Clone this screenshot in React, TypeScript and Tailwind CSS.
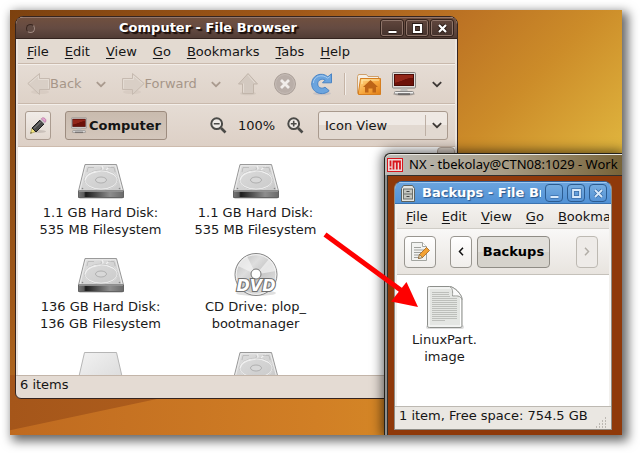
import React from "react";

function MenuBar({ items, className }: { items: string[]; className: string }) {
  return (
    <nav className={`flex items-center overflow-hidden whitespace-nowrap ${className}`}>
      {items.map((item) => (
        <button key={item} type="button" className="shrink-0 leading-[17px]">
          <span className="underline underline-offset-2">{item[0]}</span>
          {item.slice(1)}
        </button>
      ))}
    </nav>
  );
}

function Chevron({ color }: { color: string }) {
  return (
    <svg width="10" height="7" viewBox="0 0 10 7" fill="none" aria-hidden="true">
      <path d="M0.8 1.2 5 5.2 9.2 1.2" stroke={color} strokeWidth="1.8" />
    </svg>
  );
}

function ArrowIcon({ direction }: { direction: "left" | "right" }) {
  return (
    <svg width="23" height="24" viewBox="0 0 23 24" aria-hidden="true" className="shrink-0">
      <g transform={direction === "right" ? "matrix(-1 0 0 1 23 0)" : undefined}>
        <ellipse cx="13" cy="20" rx="9" ry="2" fill="#cfc3b9" opacity="0.5" />
        <path d="M0.8 11.5 12.5 1.5V6.5H22.5V17.5H12.5V22.5Z" fill="#d9cfc6" stroke="#c6bab0" />
        <path d="M2.5 11.5 11.5 3.8V7.5H21.5V16.5" fill="none" stroke="#e4dcd4" />
      </g>
    </svg>
  );
}

function UpIcon() {
  return (
    <svg width="22" height="24" viewBox="0 0 22 24" aria-hidden="true">
      <ellipse cx="11" cy="21.5" rx="8" ry="1.8" fill="#d3c8be" />
      <path d="M11 1.5 20.5 12H16.5V21.5H5.5V12H1.5Z" fill="#d3c9c0" stroke="#c1b5aa" />
      <path d="M11 3.2 17.8 11M6.5 11.5V20.5" fill="none" stroke="#e4dbd3" />
    </svg>
  );
}

function StopIcon() {
  return (
    <svg width="24" height="24" viewBox="0 0 24 24" aria-hidden="true">
      <circle cx="12" cy="12" r="10.5" fill="#b9aea8" stroke="#aa9f98" />
      <circle cx="12" cy="12" r="9.4" fill="none" stroke="#c5bbb5" />
      <path d="M8 8l8 8M16 8l-8 8" stroke="#f1edea" strokeWidth="2.8" />
    </svg>
  );
}

function ReloadIcon() {
  return (
    <svg width="24" height="24" viewBox="0 0 24 24" aria-hidden="true">
      <ellipse cx="12" cy="21.5" rx="9" ry="1.8" fill="#c9c3c3" />
      <path
        d="M17.8 4.8 21.5 1.8V10.8H12.5L15.2 8.1C11.6 6 7.6 8.2 7.7 12c.2 3.900 4.200 5.200 7.300 3.200l4.200 3.500C13 24.500 1.800 21.200 1.700 12 1.800 3 11.600-.6 17.800 4.800Z"
        fill="#6ba4de"
        stroke="#4a84c4"
      />
      <path d="M3.3 11C4 4 12 1.5 17.800 6.200l2.200-1.800" fill="none" stroke="#a5cbf0" />
    </svg>
  );
}

function HomeIcon() {
  return (
    <svg width="26" height="24" viewBox="0 0 26 24" aria-hidden="true">
      <defs>
        <linearGradient id="home" x1="0" y1="0" x2="1" y2="1">
          <stop offset="0" stopColor="#ffdc8c" />
          <stop offset="0.55" stopColor="#f6a53b" />
          <stop offset="1" stopColor="#df7c14" />
        </linearGradient>
      </defs>
      <path d="M1.500 21.500V4.500l1-2h8l1.500 2H22.500V21Z" fill="#f4efe6" stroke="#d0a06a" />
      <path d="M4 6.500h17" stroke="#cabfae" />
      <path d="M2.500 22.500V20L4.500 6.500h20v16Z" fill="url(#home)" stroke="#d67e20" />
      <path d="M6 12V8H23" fill="none" stroke="#ffe7a5" />
      <path d="M14.500 8 22 15H20v5.500h-3.500v-4h-4v4H9V15H7Z" fill="#bd6517" />
    </svg>
  );
}

function ComputerIcon({ width, height }: { width: number; height: number }) {
  return (
    <svg width={width} height={height} viewBox="0 0 24 24" aria-hidden="true" className="shrink-0">
      <ellipse cx="12" cy="22" rx="11" ry="1.800" fill="#b3a9a2" />
      <rect x="0.500" y="0.500" width="23" height="15.500" rx="1" fill="#dddddb" stroke="#85817e" />
      <rect x="2" y="2" width="20" height="12" fill="#4c0b06" />
      <path d="M3 3h18v3C13 6 10 10 3 11Z" fill="#932619" />
      <path d="M21 6v7H3v-2C10 10 13 6 21 6Z" fill="#6c1109" />
      <path d="M9 16.500h6l1 3H8Z" fill="#bcbcba" />
      <rect x="2.500" y="19.500" width="19" height="2.500" rx="1" fill="#f0f0ef" stroke="#8a8886" />
      <path d="M6 22h12" stroke="#3f3d3c" />
    </svg>
  );
}

function PencilIcon() {
  return (
    <svg width="18" height="18" viewBox="0 0 18 18" aria-hidden="true">
      <ellipse cx="10" cy="14.500" rx="7" ry="1.500" fill="#c9c0b9" />
      <path d="M1.500 16.500 3 11 6.500 14.500Z" fill="#f2e37c" stroke="#a39a4f" strokeWidth="0.700" />
      <path d="M3 11 11 3l4 4-8 8Z" fill="#4a4a4a" stroke="#1c1c1c" />
      <path d="M5 11.500 11.500 5" stroke="#8b8b8b" />
      <path d="M11 3l1.300-1.300 4 4L15 7Z" fill="#cacaca" />
      <path d="m12.300 1.700 1-.8c2-.8 4.200 1.600 3.600 3.300l-.9 1.200Z" fill="#e6a3d1" stroke="#b575a0" strokeWidth="0.700" />
      <path d="m1.500 16.500.4-1.400 1 1Z" fill="#222" />
    </svg>
  );
}

function Magnifier({ plus }: { plus?: boolean }) {
  return (
    <svg width="17" height="17" viewBox="0 0 17 17" fill="none" aria-hidden="true">
      <circle cx="6.700" cy="6.700" r="5.400" fill="#efebe7" stroke="#4b4b48" strokeWidth="2" />
      <path d="m11 11 4.500 4.500" stroke="#4b4b48" strokeWidth="2.600" />
      <path d={plus ? "M3.800 6.700h5.800M6.700 3.800v5.800" : "M3.800 6.700h5.800"} stroke="#4b4b48" strokeWidth="1.600" />
    </svg>
  );
}

function DiskIcon({ plain }: { plain?: boolean }) {
  return (
    <svg width="48" height="48" viewBox="0 0 48 48" aria-hidden="true" className="mx-auto block">
      <defs>
        <linearGradient id="diskTop" x1="0" y1="0" x2="1" y2="1">
          <stop offset="0" stopColor="#dedede" />
          <stop offset="1" stopColor="#c9c9c9" />
        </linearGradient>
        <linearGradient id="diskPlain" x1="0" y1="0" x2="1" y2="1">
          <stop offset="0" stopColor="#f2f2f2" />
          <stop offset="1" stopColor="#d9d9d9" />
        </linearGradient>
        <linearGradient id="diskFront" x1="0" y1="0" x2="1" y2="0">
          <stop offset="0" stopColor="#777" />
          <stop offset="0.120" stopColor="#5a5a5a" />
          <stop offset="0.160" stopColor="#1c1c1c" />
          <stop offset="0.700" stopColor="#8e8e8e" />
          <stop offset="1" stopColor="#6a6a6a" />
        </linearGradient>
      </defs>
      {plain ? (
        <path d="M7.500 8.500h32l6 26v7h-44v-7Z" fill="url(#diskPlain)" stroke="#b5b5b5" />
      ) : (
        <>
          <rect x="2" y="40" width="44" height="3" rx="1.500" fill="#d5d5d5" />
          <path d="M8 8.500h31.500L46.500 35H1.500Z" fill="url(#diskTop)" stroke="#9a9a9a" />
          <path d="M3 34 9 9.800h29.500L45 34" fill="none" stroke="#ececec" />
          <path
            d="M25 10c3 4-1 5-6 6-6 1-10 4-11 8M40 21c-3-4-7-4-9-5-3-2-1-4 3-5"
            fill="none"
            stroke="#f2f2f2"
            strokeWidth="1.200"
          />
          <path
            d="M10 16l1-4.500h6M24 11.500c1.500 2.500-1 3-5 4M31 11.500h6l1.200 4.500"
            fill="none"
            stroke="#b2b2b2"
            strokeWidth="0.700"
          />
          <ellipse cx="24" cy="24" rx="16.500" ry="9.500" fill="none" stroke="#f0f0f0" strokeWidth="1.600" />
          <ellipse cx="24" cy="24" rx="17" ry="10" fill="none" stroke="#b0b0b0" strokeWidth="0.600" />
          <ellipse cx="24" cy="24" rx="5.500" ry="3" fill="#d8d8d8" stroke="#a6a6a6" strokeWidth="0.800" />
          <path d="M1.500 35h45v6.500h-45Z" fill="url(#diskFront)" stroke="#636363" />
          <path d="M2 35.300h44" stroke="#9c9c9c" />
          <circle cx="5.500" cy="32.500" r="0.800" fill="#888" />
          <circle cx="42.500" cy="32.500" r="0.800" fill="#888" />
        </>
      )}
    </svg>
  );
}

function DvdIcon() {
  return (
    <svg width="48" height="48" viewBox="0 0 48 48" aria-hidden="true" className="mx-auto block">
      <defs>
        <linearGradient id="disc" x1="0" y1="0" x2="1" y2="1">
          <stop offset="0" stopColor="#b4b4b4" />
          <stop offset="0.350" stopColor="#dedede" />
          <stop offset="0.550" stopColor="#c6c6c6" />
          <stop offset="1" stopColor="#ededed" />
        </linearGradient>
      </defs>
      <ellipse cx="24" cy="43" rx="20" ry="3" fill="#e0e0e0" />
      <circle cx="24" cy="24.500" r="21" fill="url(#disc)" stroke="#858585" />
      <path d="M24 24.500 37 9c4 3 7 8 7 12ZM24 24.500 15 6c-4 2-7 6-9 10Z" fill="#f4f4f4" opacity="0.700" />
      <circle cx="24" cy="24.500" r="19.800" fill="none" stroke="#f3f3f3" />
      <circle cx="24" cy="24" r="5" fill="#fff" stroke="#777" />
      <text
        x="24"
        y="41"
        textAnchor="middle"
        fontFamily="DejaVu Sans, sans-serif"
        fontWeight="700"
        fontStyle="italic"
        fontSize="16"
        fill="#fff"
        stroke="#707070"
        strokeWidth="2.200"
        paintOrder="stroke"
      >
        DVD
      </text>
    </svg>
  );
}

function DocumentIcon() {
  return (
    <svg width="48" height="48" viewBox="0 0 48 48" aria-hidden="true" className="mx-auto block">
      <rect x="5" y="42" width="38" height="4" rx="2" fill="#dcdcdc" />
      <path
        d="M8.500 3.500h20c5 0 12.500 8 12.500 13v26c0 1.500-.5 2-2 2H8.500c-1.500 0-2-.5-2-2v-37c0-1.500.5-2 2-2Z"
        fill="#e4e6e3"
        stroke="#8d8f8b"
      />
      <path d="M8 5h20.500c5 0 11 6.500 11 11.500V43H8Z" fill="none" stroke="#fff" />
      <path
        d="M11 9.500h17M11 11.500h17M11 13.500h18M11 15.500h25M11 17.500h25M11 19.500h25M11 21.500h25M11 23.500h25M11 25.500h25M11 27.500h25M11 29.500h25M11 31.500h25M11 33.500h25M11 35.500h25M11 37.500h13"
        stroke="#bdbfbb"
      />
      <path d="M28.500 3.500c4 2 3 6 3 9.500 4 0 7.500-1 9.500 3.500C41 11 33 4 28.500 3.500Z" fill="#fafafa" stroke="#999b97" />
    </svg>
  );
}

function NoteIcon() {
  return (
    <svg width="20" height="22" viewBox="0 0 20 22" aria-hidden="true">
      <path d="M1.500 1.500h11l4 4v14h-15Z" fill="#f2f3f1" stroke="#a3a5a0" />
      <path d="M12.500 1.500v4h4" fill="#fff" stroke="#a3a5a0" />
      <path d="M4 6.500h7M4 9h10M4 11.500h9M4 14h6M4 16.500h5" stroke="#9fa19d" />
      <path d="m8.500 17.500 1-4 7-7 3 3-7 7Z" fill="#f3a233" stroke="#a3621a" strokeWidth="0.800" />
      <path d="m8.500 17.500 1-4 3 3Z" fill="#f2dfb4" stroke="#55452c" strokeWidth="0.500" />
    </svg>
  );
}

function CabinetIcon() {
  return (
    <svg width="14" height="17" viewBox="0 0 14 17" aria-hidden="true" className="shrink-0">
      <path d="M2.500 0.500h9l2 3v13h-13v-13Z" fill="#e4e5e1" stroke="#5c625f" />
      <rect x="2.500" y="4" width="9" height="10" fill="#c4c6c1" stroke="#6d716c" />
      <path d="M2.500 9h9" stroke="#6d716c" />
      <path d="M5.500 6.500h3M5.500 11.500h3" stroke="#444" strokeWidth="1.200" />
    </svg>
  );
}

function NxIcon() {
  return (
    <svg width="16" height="14" viewBox="0 0 16 14" aria-hidden="true" className="shrink-0">
      <rect x="0.500" y="0.500" width="15" height="13" fill="#eedada" stroke="#d8151c" />
      <path d="M3.500 2.500v6M3.500 9.800v1.700" stroke="#d8151c" strokeWidth="1.800" />
      <path d="M6.500 11.500v-8h6.500v8M9.800 3.500v8" fill="none" stroke="#d8151c" strokeWidth="1.800" />
    </svg>
  );
}

type Control = "minimize" | "maximize" | "close";

const controlPaths: Record<Control, string> = {
  minimize: "M1.500 9h8",
  maximize: "M2 2h7v7H2Z",
  close: "M2 2l7 7M9 2l-7 7",
};

function DarkControl({ kind }: { kind: Control }) {
  return (
    <button
      type="button"
      aria-label={kind}
      className="flex h-4 w-[22px] items-center justify-center rounded-[2px] border border-[#8e7469] bg-linear-to-b from-[#5f453c] to-[#46332d] outline outline-[#33221c]"
    >
      <svg width="11" height="11" viewBox="0 0 11 11" fill="none">
        <path d={controlPaths[kind]} stroke="#281a15" strokeWidth="4" />
        <path d={controlPaths[kind]} stroke="#fff" strokeWidth="2.200" />
      </svg>
    </button>
  );
}

function BlueControl({ kind }: { kind: Control }) {
  return (
    <button
      type="button"
      aria-label={kind}
      className="flex size-[18px] shrink-0 items-center justify-center rounded border border-[#2c5c91] bg-linear-to-b from-[#75acdf] to-[#5593d6]"
    >
      <svg width="11" height="11" viewBox="0 0 11 11" fill="none">
        <path d={controlPaths[kind]} stroke="#3b6ea8" strokeWidth="3.400" />
        <path d={controlPaths[kind]} stroke="#d9eafa" strokeWidth="1.800" />
      </svg>
    </button>
  );
}

function Item({ icon, lines }: { icon: React.ReactNode; lines: string[] }) {
  return (
    <figure className="h-[94px] text-center leading-[17px] text-[#1a1a1a]">
      {icon}
      <figcaption>
        {lines.map((line) => (
          <div key={line}>{line}</div>
        ))}
      </figcaption>
    </figure>
  );
}

function ComputerWindow() {
  return (
    <section className="absolute top-[6px] left-[5px] w-[443px] overflow-hidden rounded-t-lg rounded-b-md border border-[#35241f] bg-[#e4dbd3]">
      <header className="flex h-[22px] items-center gap-2 border-t border-b border-t-[#94776b] border-b-[#33231e] bg-linear-to-b from-[#70503f] via-[#654b42] to-[#513c35] pr-1 pl-[10px] text-white">
        <span className="size-[9px] rounded-full border border-[#39261f] border-r-[#a08a80] border-b-[#a08a80] bg-[#604a42]" />
        <h1 className="flex-1 text-center font-bold [text-shadow:1px_1px_1px_#1d100c,2px_2px_1px_#1d100c]">
          Computer - File Browser
        </h1>
        <div className="flex gap-[3px]">
          <DarkControl kind="minimize" />
          <DarkControl kind="maximize" />
          <DarkControl kind="close" />
        </div>
      </header>
      <div className="border-x-2 border-[#ece5df]">
        <MenuBar
          items={["File", "Edit", "View", "Go", "Bookmarks", "Tabs", "Help"]}
          className="h-[25px] gap-4 border-b border-[#c9b9ac] bg-[#e3dad1] pl-[9px]"
        />
        <div className="flex h-10 items-center border-t border-b border-t-[#f4efea] border-b-[#c9b9ac] bg-linear-to-b from-[#e5dcd4] to-[#ded2c8] pl-[9px] text-[#a69689] [text-shadow:1px_1px_0_#f6f2ee]">
          <button type="button" className="flex items-center">
            <ArrowIcon direction="left" />
            Back
          </button>
          <button type="button" aria-label="Back history" className="ml-[14px]">
            <Chevron color="#a99a8e" />
          </button>
          <button type="button" className="ml-4 flex items-center">
            <ArrowIcon direction="right" />
            Forward
          </button>
          <button type="button" aria-label="Forward history" className="ml-[14px]">
            <Chevron color="#a99a8e" />
          </button>
          <button type="button" aria-label="Up" className="ml-4">
            <UpIcon />
          </button>
          <button type="button" aria-label="Stop" className="ml-[14px]">
            <StopIcon />
          </button>
          <button type="button" aria-label="Reload" className="ml-[13px]">
            <ReloadIcon />
          </button>
          <span className="ml-[10px] h-[22px] w-[2px] border-l border-[#c5b4a6] bg-[#f3eeea]" />
          <button type="button" aria-label="Home" className="ml-[10px]">
            <HomeIcon />
          </button>
          <button type="button" aria-label="Computer" className="ml-[10px]">
            <ComputerIcon width={24} height={24} />
          </button>
          <button type="button" aria-label="More" className="ml-4">
            <Chevron color="#3d3835" />
          </button>
        </div>
        <div className="flex h-[43px] items-center border-t border-b border-t-[#f4efea] border-b-[#cdbbad] bg-linear-to-b from-[#e5dcd4] to-[#ddd0c6] pr-[7px] pl-[7px]">
          <button
            type="button"
            aria-label="Edit location"
            className="flex h-[29px] w-[26px] items-center justify-center rounded-[3px] border border-[#ab9c90] bg-linear-to-b from-[#f1ece8] to-[#e2d8cf]"
          >
            <PencilIcon />
          </button>
          <button
            type="button"
            className="ml-[14px] flex h-[29px] w-[102px] items-center gap-[2px] rounded-[3px] border border-[#9d8c7f] bg-linear-to-b from-[#c9bbae] to-[#d4c7bc] pl-[5px] font-bold"
          >
            <ComputerIcon width={16} height={17} />
            Computer
          </button>
          <button type="button" aria-label="Zoom out" className="ml-auto">
            <Magnifier />
          </button>
          <span className="ml-[11px] w-[38px]">100%</span>
          <button type="button" aria-label="Zoom in" className="ml-[11px]">
            <Magnifier plus />
          </button>
          <div className="relative ml-[14px] h-[29px] w-[130px] rounded-[3px] border border-[#a99a8e] bg-linear-to-b from-[#efe9e4] from-50% to-[#e2d9d1] to-50%">
            <select aria-label="View mode" className="h-full w-full appearance-none pl-[6px]">
              <option>Icon View</option>
            </select>
            <span className="pointer-events-none absolute top-[3px] right-0 flex h-[21px] w-[22px] items-center justify-center border-l border-[#bdafa4]">
              <Chevron color="#3d3835" />
            </span>
          </div>
        </div>
        <main className="flex h-[228px] overflow-hidden bg-white">
          <div className="grid flex-1 grid-cols-[155px_155px] content-start pt-[9px] pl-[5px]">
            <Item icon={<DiskIcon />} lines={["1.1 GB Hard Disk:", "535 MB Filesystem"]} />
            <Item icon={<DiskIcon />} lines={["1.1 GB Hard Disk:", "535 MB Filesystem"]} />
            <Item icon={<DiskIcon />} lines={["136 GB Hard Disk:", "136 GB Filesystem"]} />
            <Item icon={<DvdIcon />} lines={["CD Drive: plop_", "bootmanager"]} />
            <Item icon={<DiskIcon plain />} lines={[]} />
            <Item icon={<DiskIcon />} lines={[]} />
          </div>
          <div className="w-[18px] rounded-t border border-[#b5a79c] bg-[#dcd2c9]" />
        </main>
      </div>
      <footer className="h-[23px] border-t border-[#c3b5a9] pl-1 leading-[17px]">6 items</footer>
    </section>
  );
}

function BackupsWindow() {
  return (
    <section className="flex flex-1 flex-col overflow-hidden rounded-t-lg border border-[#8f8d87] border-t-[#2f629c] bg-[#eae7e2]">
      <header className="flex h-[22px] shrink-0 items-center gap-1 border-t border-b border-t-[#9fc7ee] border-b-[#3b73b0] bg-linear-to-b from-[#6aa3dd] to-[#5192d6] pr-1 pl-[6px]">
        <CabinetIcon />
        <h2 className="ml-[3px] flex-1 overflow-hidden font-bold whitespace-nowrap text-white [text-shadow:1px_1px_1px_#2a568a]">
          Backups - File Browser
        </h2>
        <BlueControl kind="minimize" />
        <BlueControl kind="maximize" />
        <BlueControl kind="close" />
      </header>
      <div className="flex flex-1 flex-col border-x-2 border-[#f2f0ed]">
        <MenuBar
          items={["File", "Edit", "View", "Go", "Bookmarks"]}
          className="h-[25px] shrink-0 gap-[14px] border-b border-[#cfccc6] bg-linear-to-b from-[#f4f2ef] to-[#e9e6e1] pl-[9px]"
        />
        <div className="flex h-[46px] shrink-0 items-center border-b border-[#c5c1ba] bg-linear-to-b from-[#f9f8f7] to-[#e8e4df] pr-[11px] pl-[7px]">
          <button
            type="button"
            aria-label="Edit location"
            className="flex h-8 w-8 items-center justify-center rounded border border-[#999690] bg-linear-to-b from-white to-[#f0eeeb]"
          >
            <NoteIcon />
          </button>
          <button
            type="button"
            aria-label="Previous folder"
            className="ml-[14px] flex h-8 w-[22px] items-center justify-center rounded border border-[#999690] bg-linear-to-b from-white to-[#f0eeeb]"
          >
            <svg width="6" height="9" viewBox="0 0 6 9" fill="none">
              <path d="M5 0.800 1.500 4.500 5 8.200" stroke="#111" strokeWidth="1.500" />
            </svg>
          </button>
          <button
            type="button"
            className="ml-[5px] h-8 w-[73px] rounded border border-[#8f8c85] bg-linear-to-b from-[#e1dfda] from-50% to-[#d6d3cc] to-50% font-bold text-black"
          >
            Backups
          </button>
          <button
            type="button"
            aria-label="Next folder"
            className="ml-auto flex h-8 w-[22px] items-center justify-center rounded border border-[#bdb9b2] bg-[#eeebe8]"
          >
            <svg width="6" height="9" viewBox="0 0 6 9" fill="none">
              <path d="M1 0.800 4.500 4.500 1 8.200" stroke="#b1ada6" strokeWidth="1.500" />
            </svg>
          </button>
        </div>
        <div className="flex-1 overflow-hidden bg-white pt-[8px]">
          <div className="w-[95px]">
            <Item icon={<DocumentIcon />} lines={["LinuxPart.", "image"]} />
          </div>
        </div>
      </div>
      <footer className="flex h-[23px] shrink-0 justify-between border-t border-[#bdb9b2] pr-1 pl-1 leading-[17px]">
        1 item, Free space: 754.5 GB
        <svg width="12" height="12" viewBox="0 0 12 12" aria-hidden="true" className="self-end">
          <path
            d="M10 1h1M7 4h1M10 4h1M4 7h1M7 7h1M10 7h1M1 10h1M4 10h1M7 10h1M10 10h1"
            stroke="#8f8b84"
            strokeWidth="1"
          />
        </svg>
      </footer>
    </section>
  );
}

function RemoteWindow() {
  return (
    <section className="absolute top-[143px] right-0 bottom-0 left-[374px] flex flex-col rounded-tl-md border-t border-l border-[#24211b] bg-[#8f9090] shadow-[0_0_12px_2px_rgba(0,0,0,0.6)]">
      <header className="flex h-[21px] shrink-0 items-center gap-[6px] overflow-hidden rounded-tl-md border-t border-[#e9e8e3] bg-linear-to-r from-[#bcbcb8] via-[#a89d86] to-[#776338] pl-[2px] font-['Noto_Sans',sans-serif] text-[13px] whitespace-nowrap text-black">
        <NxIcon />
        NX - tbekolay@CTN08:1029 - Work
      </header>
      <div className="ml-[2px] flex flex-1 border-t border-l border-[#30302e] bg-[#8f390a] pt-[5px] pr-[10px] pb-[5px] pl-[6px]">
        <BackupsWindow />
      </div>
    </section>
  );
}

export default function App() {
  return (
    <div className="h-screen bg-white pt-[10px] pr-[18px] pb-[18px] pl-[10px] font-['DejaVu_Sans',sans-serif] text-[13px] text-[#151515]">
      <div className="relative h-full shadow-[4px_4px_10px_2px_rgba(0,0,0,0.6)]">
        <div className="relative h-full overflow-hidden bg-[linear-gradient(135deg,#7c410f_0%,#a05819_28%,#bd7424_45%,#cc8c29_57%,#dfb33d_72%)]">
          <div className="absolute inset-x-0 bottom-0 h-[60px] bg-linear-to-r from-[#a5561a] via-[#b5641e] to-[#d99a28]" />
          <div className="absolute inset-x-0 bottom-0 h-[60px] bg-linear-to-r from-[#bf6a20] via-[#d17f25] to-[#dc9c2a] [clip-path:polygon(0_92%,24%_40%,100%_0,100%_100%,0_100%)]" />
          <ComputerWindow />
          <RemoteWindow />
          <svg
            width="100"
            height="80"
            viewBox="0 0 100 80"
            aria-hidden="true"
            className="pointer-events-none absolute top-[220px] left-[312px]"
          >
            <path d="M3 4.500 80 61" stroke="#fe0000" strokeWidth="5" />
            <path d="M96 77 69 71.500 84.500 52Z" fill="#fe0000" />
          </svg>
        </div>
      </div>
    </div>
  );
}
